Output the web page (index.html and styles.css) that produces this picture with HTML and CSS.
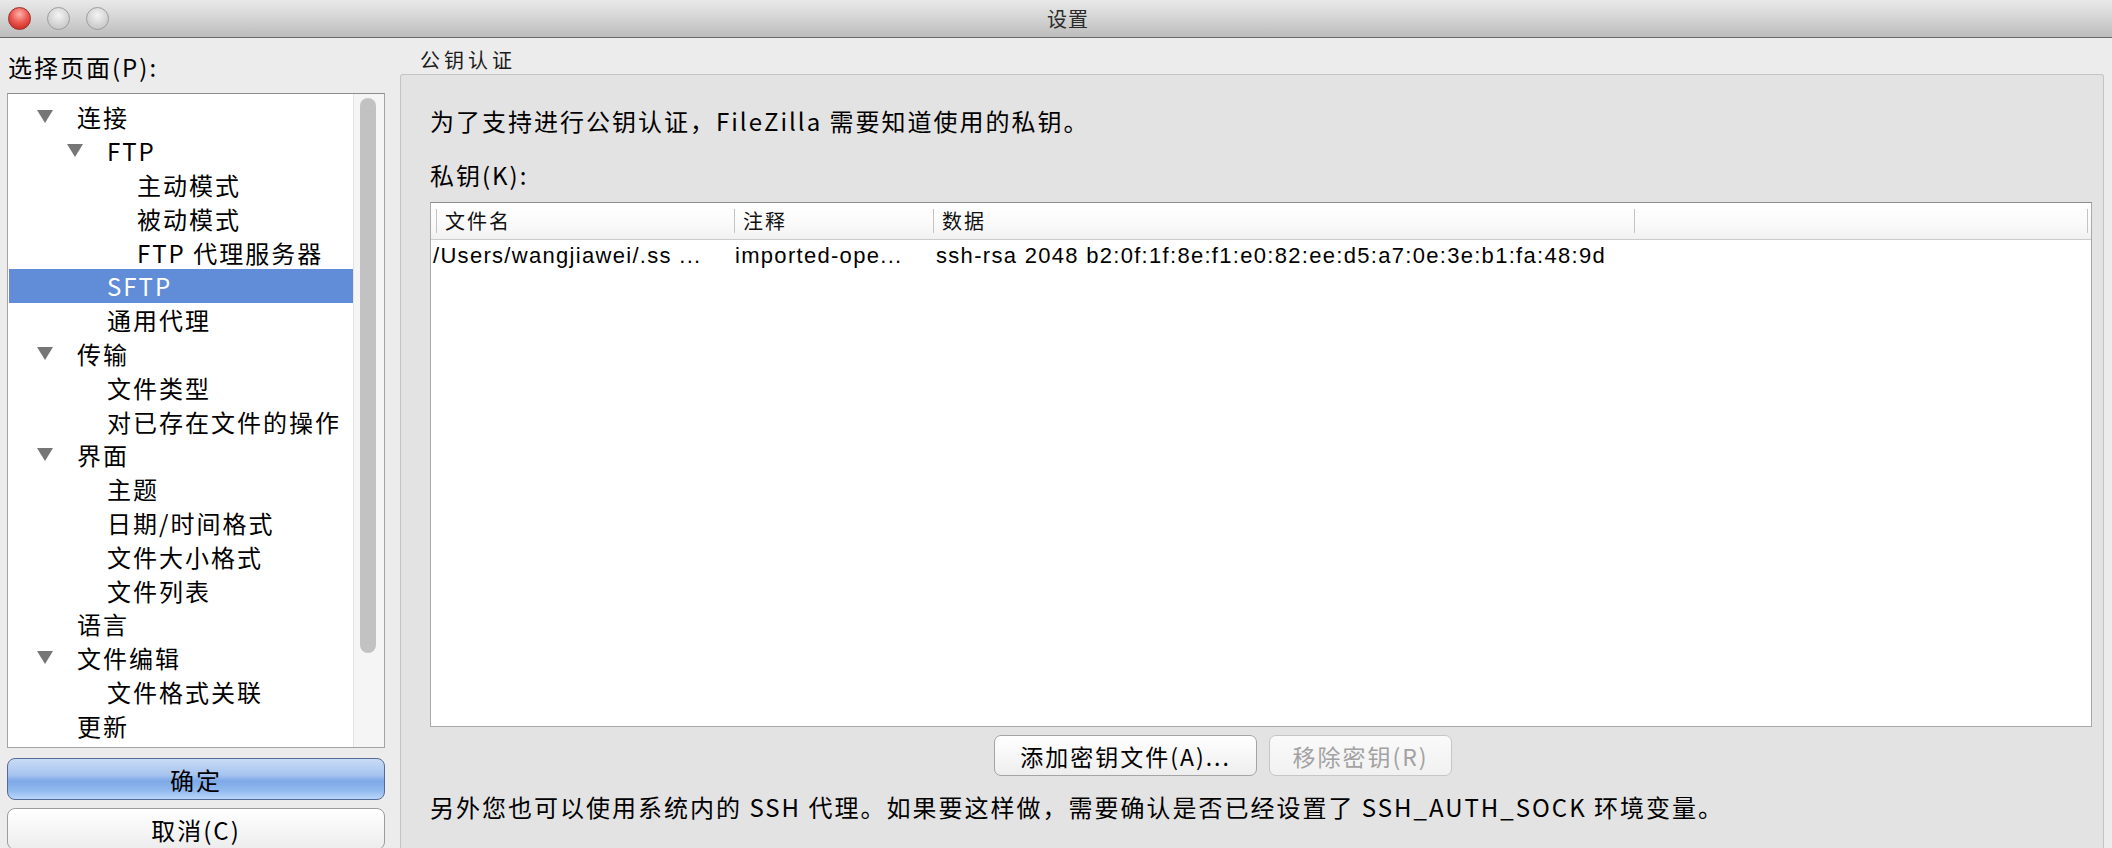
FILE: index.html
```html
<!DOCTYPE html>
<html lang="zh-CN">
<head>
<meta charset="utf-8">
<title>设置</title>
<link rel="stylesheet" href="styles.css">
</head>
<body>
<div class="window">
  <div class="titlebar">
    <div class="lights">
      <span class="light red"></span>
      <span class="light"></span>
      <span class="light"></span>
    </div>
    <div class="title">设置</div>
    <div class="spacer"></div>
  </div>
  <div class="content">
    <div class="left">
      <div class="label">选择页面(P):</div>
      <div class="tree">
        <div class="tree-list">
          <div class="row l0"><span class="tw"></span><span class="tx">连接</span></div>
          <div class="row l1"><span class="tw"></span><span class="tx">FTP</span></div>
          <div class="row l2"><span class="tx">主动模式</span></div>
          <div class="row l2"><span class="tx">被动模式</span></div>
          <div class="row l2"><span class="tx">FTP 代理服务器</span></div>
          <div class="row l1 sel"><span class="tx">SFTP</span></div>
          <div class="row l1"><span class="tx">通用代理</span></div>
          <div class="row l0"><span class="tw"></span><span class="tx">传输</span></div>
          <div class="row l1"><span class="tx">文件类型</span></div>
          <div class="row l1"><span class="tx">对已存在文件的操作</span></div>
          <div class="row l0"><span class="tw"></span><span class="tx">界面</span></div>
          <div class="row l1"><span class="tx">主题</span></div>
          <div class="row l1"><span class="tx">日期/时间格式</span></div>
          <div class="row l1"><span class="tx">文件大小格式</span></div>
          <div class="row l1"><span class="tx">文件列表</span></div>
          <div class="row l0n"><span class="tx">语言</span></div>
          <div class="row l0"><span class="tw"></span><span class="tx">文件编辑</span></div>
          <div class="row l1"><span class="tx">文件格式关联</span></div>
          <div class="row l0n"><span class="tx">更新</span></div>
        </div>
        <div class="scroll"><div class="thumb"></div></div>
      </div>
      <div class="btn btn-ok">确定</div>
      <div class="btn btn-cancel">取消(C)</div>
    </div>
    <div class="right">
      <div class="section-title">公钥认证</div>
      <div class="panel">
        <div class="intro">为了支持进行公钥认证，FileZilla 需要知道使用的私钥。</div>
        <div class="keys-label">私钥(K):</div>
        <div class="table">
          <div class="thead">
            <div class="th c1">文件名</div>
            <div class="th c2">注释</div>
            <div class="th c3">数据</div>
            <div class="th c4"></div>
          </div>
          <div class="trow">
            <div class="td d1">/Users/wangjiawei/.ss ...</div>
            <div class="td d2">imported-ope...</div>
            <div class="td d3">ssh-rsa 2048 b2:0f:1f:8e:f1:e0:82:ee:d5:a7:0e:3e:b1:fa:48:9d</div>
          </div>
        </div>
        <div class="actions">
          <div class="pbtn">添加密钥文件(A)...</div>
          <div class="pbtn disabled">移除密钥(R)</div>
        </div>
        <div class="note">另外您也可以使用系统内的 SSH 代理。如果要这样做，需要确认是否已经设置了 SSH_AUTH_SOCK 环境变量。</div>
      </div>
    </div>
  </div>
</div>
</body>
</html>
```
FILE: styles.css
```css
* { box-sizing: border-box; }
html, body { margin: 0; padding: 0; }
body {
  width: 2112px;
  height: 848px;
  overflow: hidden;
  background: #ececec;
  font-family: "Noto Sans CJK SC", "Noto Sans", sans-serif;
  font-size: 24px;
  letter-spacing: 2px;
  color: #000;
}
.window { width: 2112px; height: 848px; display: flex; flex-direction: column; }

.titlebar {
  height: 38px;
  flex: none;
  display: grid;
  grid-template-columns: 1fr auto 1fr;
  align-items: center;
  background: linear-gradient(#e9e9e9, #d6d6d6 45%, #bcbcbc);
  border-bottom: 1px solid #6a6a6a;
}
.lights { display: flex; gap: 16px; padding-left: 8px; }
.light {
  width: 23px; height: 23px; border-radius: 50%;
  background: radial-gradient(circle at 50% 35%, #f4f4f4, #d2d2d2 60%, #bdbdbd);
  border: 1px solid #9d9d9d;
}
.light.red {
  background: radial-gradient(circle at 50% 30%, #ffb3ad, #ec5a52 45%, #c8261f 90%);
  border-color: #9a2b25;
}
.title { font-size: 20px; color: #2a2a2a; letter-spacing: 1px; padding-left: 24px; }

.content { flex: 1; display: flex; padding: 0 8px 0 7px; min-height: 0; }

.left { width: 378px; flex: none; display: flex; flex-direction: column; }
.label { height: 55px; flex: none; display: flex; align-items: center; padding-top: 2px; padding-left: 1px; }
.tree {
  height: 655px; flex: none;
  display: flex;
  background: #fff;
  border: 1px solid #a3a3a3;
  border-top-color: #8e8e8e;
}
.tree-list { flex: 1; padding-top: 6px; }
.row { height: 33.8px; display: flex; align-items: center; white-space: nowrap; }
.tw {
  width: 0; height: 0; flex: none;
  border-left: 8px solid transparent;
  border-right: 8px solid transparent;
  border-top: 13px solid #767676;
  margin-right: 24px;
}
.l0 { padding-left: 29px; }
.l1 { padding-left: 59px; }
.l1 .tx:only-child { margin-left: 40px; }
.l0n { padding-left: 69px; }
.l2 { padding-left: 129px; }
.sel { background: #608cd8; color: #fff; margin-left: 1px; padding-left: 98px; }
.sel .tx:only-child { margin-left: 0; }
.scroll {
  width: 31px; flex: none;
  background: #f5f5f5;
  border-left: 1px solid #e4e4e4;
  padding: 4px 0 0 6px;
}
.thumb { width: 16px; height: 555px; border-radius: 8px; background: #c2c2c2; }

.btn {
  height: 42px; flex: none;
  display: flex; align-items: center; justify-content: center;
  border-radius: 8px;
}
.btn-ok {
  margin-top: 10px;
  border: 1px solid #566a98;
  background: linear-gradient(#c9dcf5, #a6c3ef 40%, #7ea8e7 55%, #93bbef 80%, #b9d6f8);
}
.btn-cancel {
  margin-top: 8px;
  border: 1px solid #9c9c9c;
  background: linear-gradient(#ffffff, #f6f6f6 50%, #ececec);
}

.right { flex: 1; margin-left: 15px; display: flex; flex-direction: column; min-width: 0; }
.section-title { height: 36px; flex: none; padding: 8px 0 0 20px; font-size: 20px; letter-spacing: 4px; line-height: 28px; color: #1a1a1a; }
.panel {
  flex: 1;
  background: #e3e3e3;
  border: 1px solid #c4c4c4;
  border-bottom: none;
  border-radius: 3px 3px 0 0;
  padding: 31px 11px 0 29px;
}
.intro { line-height: 30px; }
.keys-label { line-height: 30px; margin-top: 24px; }
.table {
  margin-top: 12px;
  height: 525px;
  background: #fff;
  border: 1px solid #a9a9a9;
  border-top-color: #8a8a8a;
}
.thead {
  height: 37px;
  display: flex;
  padding-left: 5px;
  background: linear-gradient(#ffffff, #fafafa 60%, #f1f1f1);
  border-bottom: 1px solid #cbcbcb;
}
.th {
  margin: 6px 0;
  padding-left: 8px;
  border-left: 1px solid #c4c4c4;
  font-size: 20px;
  line-height: 24px;
  color: #111;
}
.c1 { width: 298px; }
.c2 { width: 199px; }
.c3 { width: 701px; }
.c4 { width: 454px; border-right: 1px solid #c4c4c4; }
.trow { height: 32px; display: flex; align-items: center; }
.td {
  font-family: "Liberation Sans", "Noto Sans CJK SC", sans-serif;
  font-size: 22px;
  letter-spacing: 1.3px;
  white-space: nowrap;
  padding-left: 2px;
}
.d1 { width: 302px; }
.d2 { width: 201px; }
.actions { display: flex; margin-top: 8px; margin-left: 564px; gap: 12px; }
.pbtn {
  height: 41px;
  display: flex; align-items: center; justify-content: center;
  border-radius: 7px;
  border: 1px solid #a4a4a4;
  background: linear-gradient(#ffffff, #f7f7f7 50%, #ededed);
  font-size: 23px;
}
.pbtn:first-child { width: 263px; }
.pbtn.disabled { width: 183px; color: #a2a2a2; border-color: #c6c6c6; background: linear-gradient(#fafafa, #f1f1f1); }
.note { margin-top: 16px; line-height: 30px; white-space: nowrap; }
```
